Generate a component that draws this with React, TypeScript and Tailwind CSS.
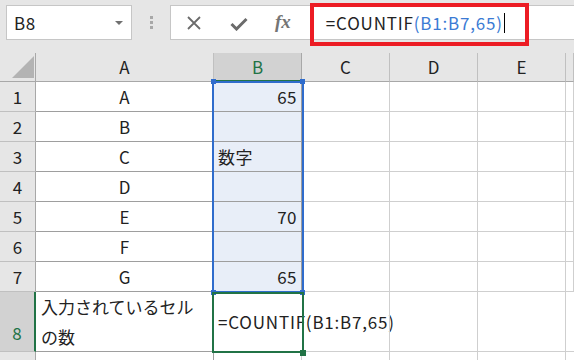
import { clsx } from 'clsx'

const font = { fontFamily: '"Noto Sans CJK JP", "Noto Sans", sans-serif' }

const colWidths = ['w-[36px]', 'w-[178px]', 'w-[88px]', 'w-[88px]', 'w-[88px]', 'w-[88px]', 'w-[8px]']
const colNames = ['A', 'B', 'C', 'D', 'E', '']

const rows = [
  { n: 1, a: 'A', b: '65', right: true },
  { n: 2, a: 'B', b: '' },
  { n: 3, a: 'C', b: '数字' },
  { n: 4, a: 'D', b: '' },
  { n: 5, a: 'E', b: '70', right: true },
  { n: 6, a: 'F', b: '' },
  { n: 7, a: 'G', b: '65', right: true },
]

function Handle({ className }: { className: string }) {
  return <div className={clsx('absolute w-[5px] h-[5px]', className)} />
}

export default function App() {
  return (
    <div className="w-[574px] h-[360px] overflow-hidden bg-white text-[#222]" style={font}>
      {/* formula bar */}
      <div className="h-[53px] bg-[#e6e6e6] flex items-start pt-[5px] pl-[6px]">
        <div className="w-[126px] h-[35px] bg-white border border-[#c6c6c6] flex items-center pl-[7px] pr-[8px]">
          <span className="text-[17px] tracking-[0.5px] flex-1">B8</span>
          <div className="w-0 h-0 border-l-[4px] border-r-[4px] border-t-[4px] border-l-transparent border-r-transparent border-t-[#707070]" />
        </div>
        <div className="w-[38px] h-[35px] flex flex-col items-center justify-center gap-[2px]">
          <div className="w-[3px] h-[3px] bg-[#a8a8a8]" />
          <div className="w-[3px] h-[3px] bg-[#a8a8a8]" />
          <div className="w-[3px] h-[3px] bg-[#a8a8a8]" />
        </div>
        <div className="relative flex-1 h-[35px] bg-white border border-r-0 border-[#c6c6c6] flex items-center">
          <svg width="16" height="14" viewBox="0 0 16 14" className="ml-[15px]">
            <path d="M2 1 L14 13 M14 1 L2 13" stroke="#6b6b6b" strokeWidth="1.8" fill="none" />
          </svg>
          <svg width="18" height="14" viewBox="0 0 18 14" className="ml-[28px] mt-[2px]">
            <path d="M1.5 7 L6.5 12 L16.5 2" stroke="#6b6b6b" strokeWidth="3" fill="none" />
          </svg>
          <span
            className="ml-[27px] text-[19px] italic font-bold text-[#757575]"
            style={{ fontFamily: '"Liberation Serif", serif' }}
          >
            fx
          </span>
          <span className="ml-[35px] text-[17px] tracking-[0.8px] whitespace-nowrap">
            =COUNTIF<span className="text-[#3b7bd4]">(B1:B7,65)</span>
          </span>
          <div className="w-[1px] h-[20px] bg-black ml-[1px]" />
          <div className="absolute left-[139px] top-[-3px] w-[219px] h-[43px] border-[4px] border-[#ec1c24]" />
        </div>
      </div>

      {/* grid */}
      <div className="relative text-[17px]">
        <div className="flex h-[29px]">
          <div className={clsx(colWidths[0], 'relative bg-[#e6e6e6] border-r border-b border-[#a8a8a8]')}>
            <svg width="22" height="22" viewBox="0 0 22 22" className="absolute left-[12px] top-[3px]">
              <path d="M0 22 L22 22 L22 0 Z" fill="#b3b3b3" />
            </svg>
          </div>
          {colNames.map((c, i) => (
            <div
              key={i}
              className={clsx(
                colWidths[i + 1],
                'flex items-center justify-center border-r',
                c === 'B'
                  ? 'bg-[#d2d2d2] text-[#217346] border-b-2 border-b-[#217346] border-r-[#a8a8a8]'
                  : 'bg-[#e6e6e6] border-b border-[#a8a8a8] border-r-[#c0c0c0]'
              )}
            >
              {c}
            </div>
          ))}
        </div>

        {rows.map((r) => (
          <div key={r.n} className="flex h-[30px]">
            <div className={clsx(colWidths[0], 'bg-[#e6e6e6] border-r border-r-[#a8a8a8] border-b border-b-[#c0c0c0] flex items-center justify-center')}>
              {r.n}
            </div>
            <div className={clsx(colWidths[1], 'border-r border-b border-[#9e9e9e] flex items-center justify-center')}>
              {r.a}
            </div>
            <div
              className={clsx(
                colWidths[2],
                'bg-[#e8eef8] border-r border-b border-[#9e9e9e] flex items-center px-[4px] tracking-[0.5px]',
                r.right ? 'justify-end' : 'justify-start'
              )}
            >
              {r.b}
            </div>
            {[3, 4, 5, 6].map((i) => (
              <div key={i} className={clsx(colWidths[i], 'border-r border-b border-[#cfcfcf]')} />
            ))}
          </div>
        ))}

        <div className="flex h-[60px]">
          <div className={clsx(colWidths[0], 'bg-[#d2d2d2] text-[#217346] border-r-2 border-r-[#217346] border-b border-b-[#c0c0c0] flex items-end justify-center pb-[6px]')}>
            8
          </div>
          <div className={clsx(colWidths[1], 'border-r border-b border-[#9e9e9e] px-[5px] leading-[30px]')}>
            入力されているセルの数
          </div>
          <div className={clsx(colWidths[2], 'border-b border-[#9e9e9e] flex items-center px-[4px] whitespace-nowrap overflow-visible tracking-[0.8px]')}>
            =COUNTIF(B1:B7,65)
          </div>
          <div className={clsx(colWidths[3], 'border-r border-b border-[#cfcfcf]')} />
          <div className={clsx(colWidths[4], 'border-r border-b border-[#cfcfcf]')} />
          <div className={clsx(colWidths[5], 'border-r border-b border-[#cfcfcf]')} />
          <div className={clsx(colWidths[6], 'border-b border-[#cfcfcf]')} />
        </div>

        <div className="flex h-[10px]">
          <div className={clsx(colWidths[0], 'bg-[#e6e6e6] border-r border-[#a8a8a8]')} />
          <div className={clsx(colWidths[1], 'border-r border-[#9e9e9e]')} />
          {[2, 3, 4, 5].map((i) => (
            <div key={i} className={clsx(colWidths[i], 'border-r border-[#cfcfcf]')} />
          ))}
        </div>

        {/* selection overlays */}
        <div className="absolute left-[212px] top-[28px] w-[92px] h-[212px] border-2 border-[#2f6ccc] pointer-events-none" />
        <Handle className="left-[211px] top-[26px] bg-[#2f6ccc]" />
        <Handle className="left-[300px] top-[26px] bg-[#2f6ccc]" />
        <Handle className="left-[211px] top-[237px] bg-[#2f6ccc]" />
        <Handle className="left-[300px] top-[237px] bg-[#2f6ccc]" />
        <div className="absolute left-[212px] top-[239px] w-[92px] h-[61px] border-2 border-[#217346] pointer-events-none" />
        <Handle className="left-[300px] top-[297px] w-[6px] h-[6px] bg-[#217346]" />
      </div>
    </div>
  )
}
